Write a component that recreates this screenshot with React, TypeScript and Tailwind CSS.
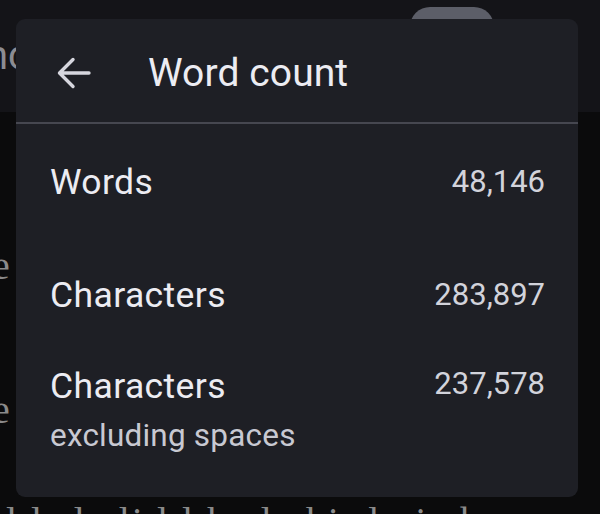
import React from "react";

const ROWS = [
  { label: "Words", value: "48,146" },
  { label: "Characters", value: "283,897" },
];

function BackArrow() {
  return (
    <svg width="36" height="34" viewBox="0 0 36 34" fill="none" aria-hidden>
      <path
        d="M33 17H4M17 3.5L3.5 17 17 30.5"
        stroke="#d6d6de"
        strokeWidth="3.4"
        strokeLinecap="round"
        strokeLinejoin="round"
      />
    </svg>
  );
}

export default function App() {
  return (
    <div
      className="relative w-[600px] h-[514px] overflow-hidden bg-[#0b0b0c]"
      style={{ fontFamily: "Roboto, 'Noto Sans', sans-serif" }}
    >
      {/* document behind the dialog */}
      <div className="flex flex-col h-full">
        <div className="relative shrink-0 h-[112px] bg-[#141418] flex items-start">
          <span className="mt-[36px] ml-[-14px] text-[40px] leading-[40px] text-[#8c8c92]">nc</span>
          <div className="absolute left-[410px] top-[7px] w-[84px] h-[40px] rounded-full bg-[#5c5e68]" />
        </div>
        <div
          className="flex-1 min-h-0 flex flex-col text-[#8a8a8a] text-[40px]"
          style={{ fontFamily: "'Liberation Serif', serif" }}
        >
          <span className="shrink-0 mt-[134px] ml-[-8px] leading-[40px]">e</span>
          <span className="shrink-0 mt-[104px] ml-[-8px] leading-[40px]">e</span>
          <span className="shrink-0 mt-[72px] ml-[6px] leading-[40px] tracking-[2px] whitespace-nowrap">
            l ls l ali l l ha lc hi rl ui ebe
          </span>
        </div>
      </div>

      {/* word count dialog */}
      <div className="absolute left-[16px] top-[19px] w-[562px] h-[478px] rounded-[9px] bg-[#1e1f25] flex flex-col">
        <div className="h-[103px] flex items-center pl-[40px] pt-[5px]">
          <BackArrow />
          <h1 className="ml-[56px] text-[39px] leading-none text-[#ececf2] tracking-[0.1px]">
            Word count
          </h1>
        </div>
        <div className="h-[2px] bg-[#464750]" />

        <div className="mt-[2px] flex flex-col px-[34px] pr-[33px]">
          {ROWS.map((row) => (
            <div key={row.label} className="h-[113px] flex items-center justify-between">
              <span className="text-[35.5px] tracking-[0.4px] text-[#ececf2]">{row.label}</span>
              <span className="text-[31px] text-[#d2d3db]">{row.value}</span>
            </div>
          ))}
          <div className="mt-[14px] flex justify-between items-start">
            <div className="flex flex-col">
              <span className="text-[35.5px] tracking-[0.4px] leading-[40px] text-[#ececf2]">
                Characters
              </span>
              <span className="mt-[10px] text-[31.5px] tracking-[0.2px] leading-[40px] text-[#c8c9d2]">
                excluding spaces
              </span>
            </div>
            <span className="text-[31px] leading-[36px] text-[#d2d3db]">237,578</span>
          </div>
        </div>
      </div>
    </div>
  );
}
